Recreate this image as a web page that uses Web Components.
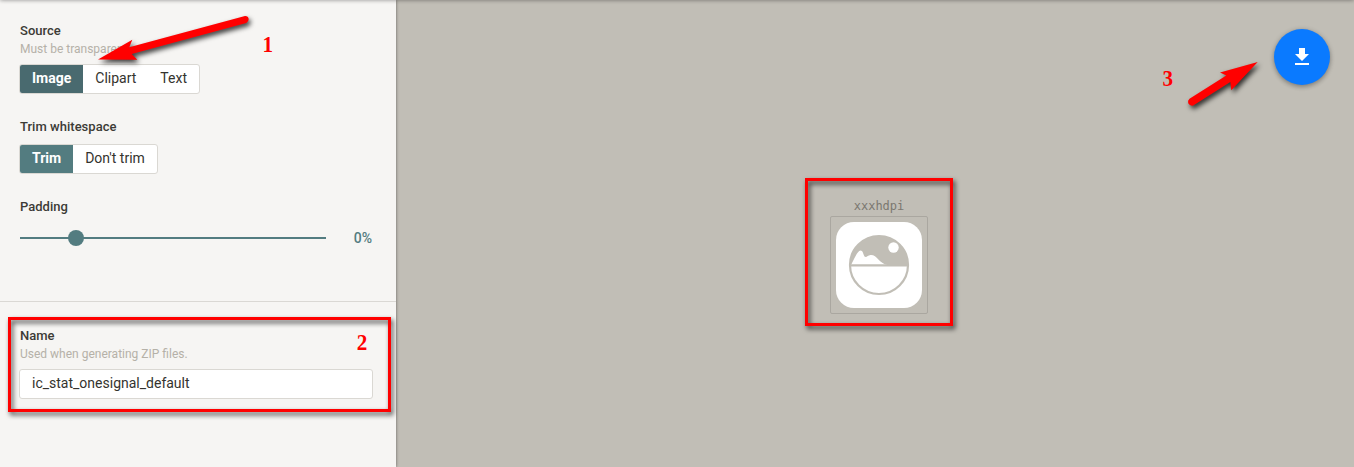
<!DOCTYPE html>
<html lang="en">
<head>
<meta charset="utf-8">
<title>Notification icon generator</title>
<style>
html,body{margin:0;height:100%;overflow:hidden}
body{font-family:Roboto,"Liberation Sans",sans-serif;color:#39382f}
</style>
</head>
<body>
<icon-studio></icon-studio>
<script>
const define = (name, html) => {
  const t = document.createElement('template');
  t.innerHTML = html;
  customElements.define(name, class extends HTMLElement {
    constructor() {
      super();
      this.attachShadow({mode: 'open'}).append(t.content.cloneNode(true));
    }
  });
};

define('form-field', `<style>
:host{display:block}
.label{font-size:13px;font-weight:500;line-height:20px;padding-top:1px;color:#3c3b36;letter-spacing:.02px}
::slotted([slot=hint]){display:block;font-size:12px;line-height:17px;color:#b5b1a8}
.control{margin-top:var(--gap,7px)}
</style><div class="label"><slot name="label"></slot></div><slot name="hint"></slot><div class="control"><slot></slot></div>`);

define('button-group', `<style>
:host{display:flex;width:max-content;height:28px;margin-left:-1px;border:1px solid #dad8d3;border-radius:3px;background:#fff;overflow:hidden}
</style><slot></slot>`);

define('group-option', `<style>
:host{display:block;padding:0 12px;font-size:14px;line-height:27px;color:#34332e;height:28px}
:host([selected]){background:var(--accent,#537c80);color:#fff;font-weight:700;margin:-1px 0 -1px -1px;padding:1px 12px 1px 13px}
</style><slot></slot>`);

define('range-slider', `<style>
:host{display:flex;align-items:center;height:30px}
.track{width:306px;height:2px;background:#537c80;display:flex;align-items:center}
.thumb{width:16px;height:16px;border-radius:50%;background:#537c80;margin-left:48px}
.value{flex:1;text-align:right;font-size:14px;font-weight:500;color:#537c80}
</style><div class="track"><div class="thumb"></div></div><div class="value"><slot></slot></div>`);

define('text-box', `<style>
:host{display:block;box-sizing:border-box;height:30px;margin:0 -1px;padding:0 12px;border:1px solid #dad8d3;border-radius:3px;background:#fff;font-size:14px;line-height:27px;color:#34332e}
</style><slot></slot>`);

define('side-panel', `<style>
:host{display:block;box-sizing:border-box;width:396px;height:100%;background:#f6f5f3;box-shadow:0 0 3px rgba(0,0,0,.5);position:relative}
section{padding:20px 24px 0 20px}
.main{display:flex;flex-direction:column;gap:22px;height:281px;border-bottom:1px solid #dad8d4}
.source{--gap:6px;--accent:#496a6f}
.name{padding-top:23px;--gap:6px}
</style>
<section class="main">
<form-field class="source"><span slot="label">Source</span><span slot="hint">Must be transparent</span>
<button-group><group-option selected>Image</group-option><group-option>Clipart</group-option><group-option>Text</group-option></button-group></form-field>
<form-field><span slot="label">Trim whitespace</span>
<button-group><group-option selected>Trim</group-option><group-option>Don't trim</group-option></button-group></form-field>
<form-field style="--gap:6px"><span slot="label">Padding</span><range-slider>0%</range-slider></form-field>
</section>
<section class="name"><form-field><span slot="label">Name</span><span slot="hint">Used when generating ZIP files.</span>
<text-box>ic_stat_onesignal_default</text-box></form-field></section>`);

define('icon-preview', `<style>
:host{display:flex;flex-direction:column;align-items:center;gap:2px}
.density{font:12px/16px "DejaVu Sans Mono","Liberation Mono",monospace;color:#7b7870;height:16px}
.frame{width:96px;height:96px;border:1px solid #aaa7a0;border-radius:2px}
svg{display:block}
</style><div class="density"><slot></slot></div>
<div class="frame"><svg width="96" height="96" viewBox="831 217 96 96">
<rect x="836" y="222" width="86" height="86" rx="18" fill="#fff"/>
<circle cx="879" cy="265" r="29" fill="#fff" stroke="#c1beb6" stroke-width="2.2"/>
<path d="M850 265A29 29 0 0 1 908 265H887.500C879 263.500 877 254.500 870.500 255C867.500 255.300 866.500 258 864.500 256.500C863 254 863 250.500 860.500 250.500C857.500 251 855.500 256.500 851.500 264Z" fill="#c1beb6"/>
<circle cx="893.500" cy="247.500" r="5.200" fill="#fff"/>
<path d="M850 265.400H908" stroke="#c1beb6" stroke-width="2.200"/>
</svg></div>`);

define('download-button', `<style>
:host{display:flex;align-items:center;justify-content:center;width:56px;height:56px;border-radius:50%;background:#0a7aff;box-shadow:0 1px 5px rgba(0,0,0,.3),0 3px 4px rgba(0,0,0,.1)}
</style><svg width="24" height="24" viewBox="0 0 24 24"><path fill="#fff" d="M19 9h-4V3H9v6H5l7 7 7-7zM5 18v2h14v-2H5z"/></svg>`);

define('work-area', `<style>
:host{display:grid;grid-template:29px 56px 1fr / 1fr 56px 24px;flex:1;background:#c1beb6}
download-button{grid-area:2/2}
icon-preview{grid-area:3/1/4/4;justify-self:start;margin:113px 0 0 434px}
</style><download-button></download-button><icon-preview>xxxhdpi</icon-preview>`);

/* Tutorial callouts drawn on top of the page. */
define('guide-callouts', `<style>
:host{position:absolute;inset:0;pointer-events:none;overflow:hidden}
svg{display:block}
rect{fill:none;stroke:#f00;stroke-width:3}
text{font:700 23px "Liberation Serif",serif;fill:#f00}
.shadow{filter:drop-shadow(2px 3px 2.5px rgba(0,0,0,.75))}
</style><svg width="1354" height="467">
<g class="shadow">
<rect x="9.5" y="318.5" width="380" height="92"/>
<rect x="806.5" y="179.5" width="145" height="145"/>
<g fill="#f00">
<path d="M98 59.5L132.3 39.8L129.3 47.3L245 15.9Q248.300 15.800 248.700 19Q248.700 21.800 246.300 22.900L131.700 54L137.300 59.800Z"/>
<path d="M1257.700 62L1220 72.500L1226.300 75.500L1189.500 98.700Q1187.400 100.300 1188.200 103.300Q1190 106.300 1193.200 105.500L1230.300 82L1231.300 90.200Z"/>
</g></g>
<text transform="translate(262.500 52) scale(.92 1)">1</text><text transform="translate(356.800 350) scale(.92 1)">2</text><text transform="translate(1162.500 86) scale(.92 1)">3</text>
</svg>`);

define('icon-studio', `<style>
:host{display:flex;position:relative;width:1354px;height:467px;overflow:hidden}
.top{position:absolute;left:0;right:0;top:-4px;height:4px;box-shadow:0 0 4px rgba(0,0,0,.45)}
</style><side-panel></side-panel><work-area></work-area><div class="top"></div><guide-callouts></guide-callouts>`);
</script>
</body>
</html>
